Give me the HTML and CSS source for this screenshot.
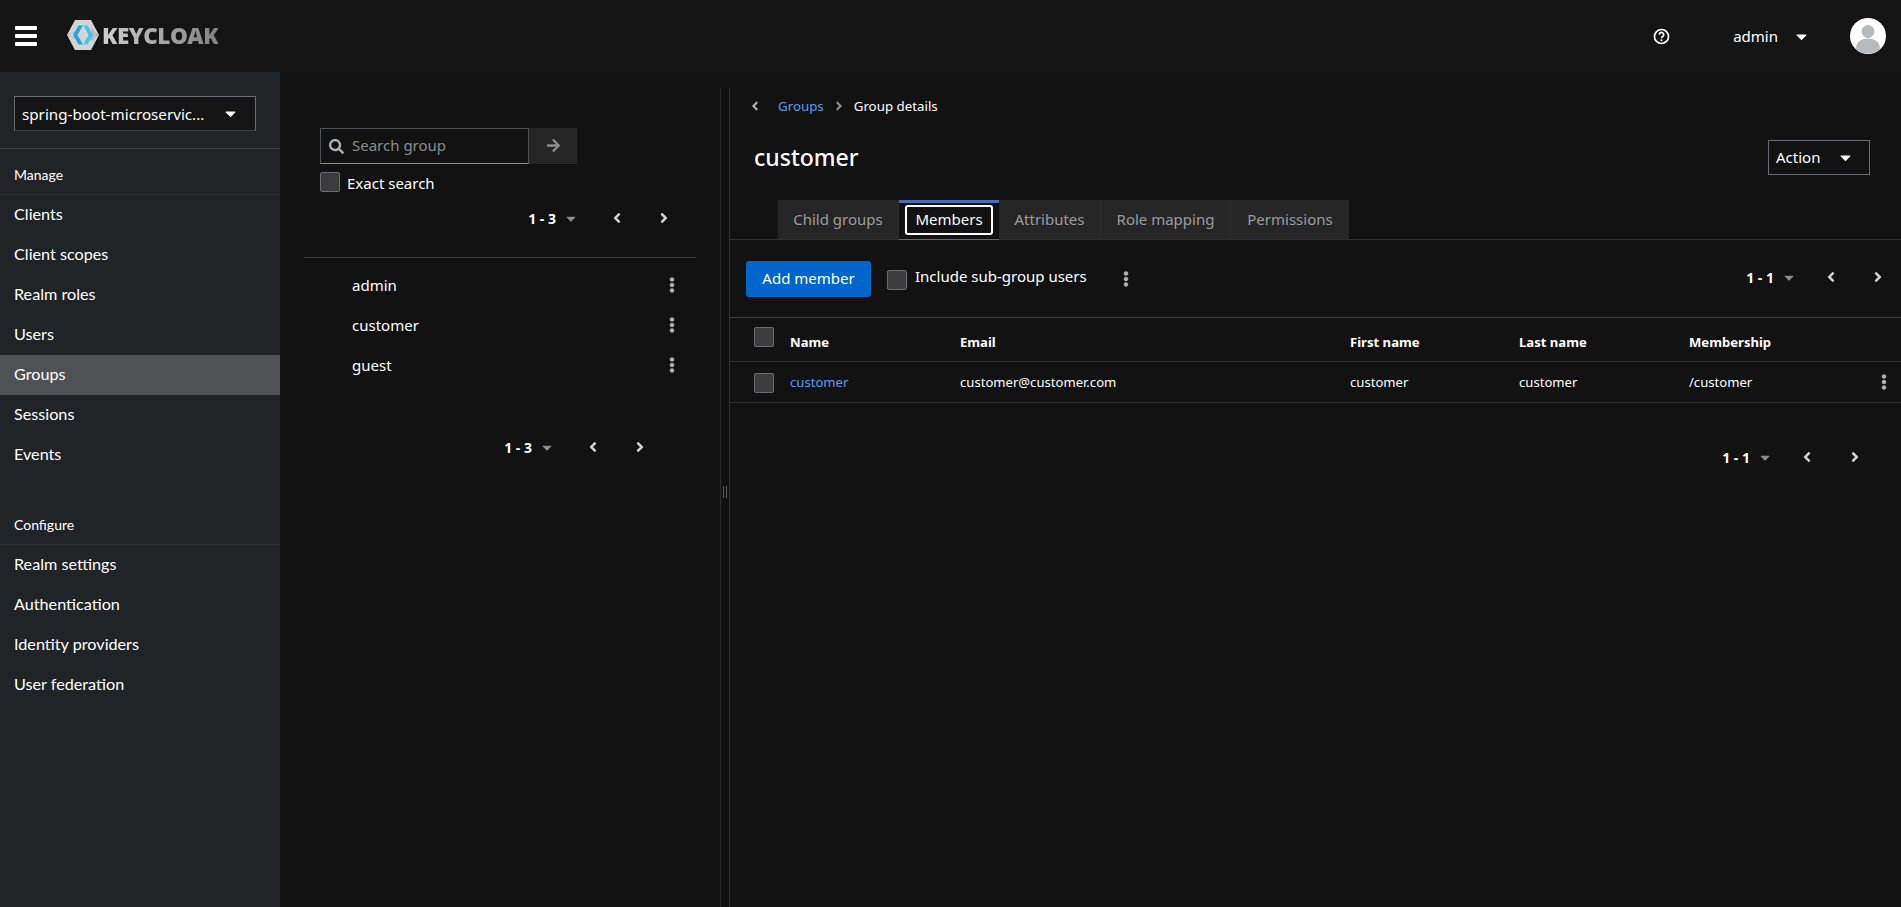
FILE: index.html
```html
<!DOCTYPE html>
<html lang="en">
<head>
<meta charset="utf-8">
<title>Keycloak - Groups</title>
<link rel="stylesheet" href="styles.css">
</head>
<body>
<svg class="defs" aria-hidden="true">
  <symbol id="caret" viewBox="0 0 320 512"><path d="M31.3 192h257.3c17.8 0 26.7 21.5 14.1 34.1L174.1 354.8c-7.8 7.8-20.5 7.8-28.3 0L17.2 226.1C4.6 213.5 13.5 192 31.3 192z"/></symbol>
  <symbol id="left" viewBox="0 0 256 512"><path d="M31.7 239l136-136c9.4-9.4 24.6-9.4 33.9 0l22.6 22.6c9.4 9.4 9.4 24.6 0 33.9L127.9 256l96.4 96.4c9.4 9.4 9.4 24.6 0 33.9L201.7 409c-9.4 9.4-24.6 9.4-33.9 0l-136-136c-9.5-9.4-9.5-24.6-.1-34z"/></symbol>
  <symbol id="right" viewBox="0 0 256 512"><path d="M224.3 273l-136 136c-9.4 9.4-24.6 9.4-33.9 0l-22.6-22.6c-9.4-9.4-9.4-24.6 0-33.9l96.4-96.4-96.4-96.4c-9.4-9.4-9.4-24.6 0-33.9L54.3 103c9.4-9.4 24.6-9.4 33.9 0l136 136c9.5 9.4 9.5 24.6.1 34z"/></symbol>
  <symbol id="kebab" viewBox="0 0 192 512"><path d="M96 184c39.8 0 72 32.2 72 72s-32.2 72-72 72-72-32.2-72-72 32.2-72 72-72zM24 80c0 39.8 32.2 72 72 72s72-32.2 72-72S135.8 8 96 8 24 40.2 24 80zm0 352c0 39.8 32.2 72 72 72s72-32.2 72-72-32.2-72-72-72-72 32.2-72 72z"/></symbol>
  <symbol id="search" viewBox="0 0 512 512"><path d="M505 442.7L405.3 343c-4.5-4.5-10.6-7-17-7H372c27.6-35.3 44-79.7 44-128C416 93.1 322.9 0 208 0S0 93.1 0 208s93.1 208 208 208c48.3 0 92.7-16.4 128-44v16.3c0 6.4 2.5 12.5 7 17l99.7 99.7c9.4 9.4 24.6 9.4 33.9 0l28.3-28.3c9.4-9.4 9.4-24.6.1-34zM208 336c-70.7 0-128-57.2-128-128 0-70.7 57.2-128 128-128 70.7 0 128 57.2 128 128 0 70.7-57.2 128-128 128z"/></symbol>
  <symbol id="arrow" viewBox="0 0 448 512"><path d="M190.5 66.9l22.2-22.2c9.4-9.4 24.6-9.4 33.9 0L441 239c9.4 9.4 9.4 24.6 0 33.9L246.6 467.3c-9.4 9.4-24.6 9.4-33.9 0l-22.2-22.2c-9.5-9.5-9.3-25 .4-34.3L311.4 296H24c-13.3 0-24-10.7-24-24v-32c0-13.3 10.7-24 24-24h287.4L190.9 101.2c-9.8-9.3-10-24.8-.4-34.3z"/></symbol>
</svg>

<header class="masthead">
  <div class="hamburger"><span></span><span></span><span></span></div>
  <div class="brand">
    <svg class="brand-mark" viewBox="0 0 32 32" aria-hidden="true">
      <polygon points="0,16 8,1 24,1 32,16 24,31 8,31" fill="#d4d4d4"/>
      <path d="M1 16 L9 12 L9 20 Z M31 16 L24 11 L27 16 L24 21 Z M24 11 L31 16 L24 21 M26 9 L26 23 M22 16 L32 16" stroke="#a8a8a8" stroke-width=".6" fill="none"/>
      <polygon points="11.500,6.500 16,6.500 10.500,16 16,25.500 11.500,25.500 6,16" fill="#25a5df"/>
      <polygon points="20.500,6.500 16.500,6.500 21.500,16 16.500,25.500 20.500,25.500 26,16" fill="#3cc6f2"/>
    </svg>
    <span class="brand-name">KEYCLOAK</span>
  </div>
  <div class="masthead-tools">
    <svg class="help" viewBox="0 0 16 16" aria-hidden="true">
      <circle cx="8" cy="8" r="6.6" fill="none" stroke="#fff" stroke-width="1.6"/>
      <path d="M5.900 6.300a2.100 2.100 0 1 1 3.300 1.700c-.8.500-1.200.9-1.200 1.600" fill="none" stroke="#fff" stroke-width="1.500"/>
      <circle cx="8" cy="11.600" r="1" fill="#fff"/>
    </svg>
    <span class="user-name">admin</span>
    <svg class="ico ico-caret-user"><use href="#caret"/></svg>
    <svg class="avatar" viewBox="0 0 36 36" aria-hidden="true">
      <circle cx="18" cy="18" r="18" fill="#fff"/>
      <circle cx="18" cy="13.500" r="6.500" fill="#b8bbbe"/>
      <path d="M6 31c0-7 5-10.500 12-10.500S30 24 30 31a18 18 0 0 1-24 0z" fill="#b8bbbe"/>
    </svg>
  </div>
</header>

<div class="shell">
  <nav class="sidebar">
    <div class="realm-wrap">
      <div class="realm-select">
        <span class="realm-name">spring-boot-microservic...</span>
        <svg class="ico ico-caret-white"><use href="#caret"/></svg>
      </div>
    </div>
    <div class="nav-title">Manage</div>
    <ul class="nav-list">
      <li class="nav-item">Clients</li>
      <li class="nav-item">Client scopes</li>
      <li class="nav-item">Realm roles</li>
      <li class="nav-item">Users</li>
      <li class="nav-item is-current">Groups</li>
      <li class="nav-item">Sessions</li>
      <li class="nav-item">Events</li>
    </ul>
    <div class="nav-title nav-title-second">Configure</div>
    <ul class="nav-list">
      <li class="nav-item">Realm settings</li>
      <li class="nav-item">Authentication</li>
      <li class="nav-item">Identity providers</li>
      <li class="nav-item">User federation</li>
    </ul>
  </nav>

  <section class="tree-panel">
    <div class="search-row">
      <div class="search-input">
        <svg class="ico ico-search"><use href="#search"/></svg>
        <span class="placeholder">Search group</span>
      </div>
      <div class="search-go"><svg class="ico ico-arrow"><use href="#arrow"/></svg></div>
    </div>
    <label class="check-row">
      <span class="checkbox"></span>
      <span class="check-label">Exact search</span>
    </label>
    <div class="pager pager-tree-top">
      <b class="pager-count">1 - 3</b>
      <svg class="ico ico-caret-grey"><use href="#caret"/></svg>
      <svg class="ico ico-chev pager-prev"><use href="#left"/></svg>
      <svg class="ico ico-chev pager-next"><use href="#right"/></svg>
    </div>
    <ul class="tree-list">
      <li class="tree-item"><span>admin</span><svg class="ico ico-kebab"><use href="#kebab"/></svg></li>
      <li class="tree-item"><span>customer</span><svg class="ico ico-kebab"><use href="#kebab"/></svg></li>
      <li class="tree-item"><span>guest</span><svg class="ico ico-kebab"><use href="#kebab"/></svg></li>
    </ul>
    <div class="pager pager-tree-bottom">
      <b class="pager-count">1 - 3</b>
      <svg class="ico ico-caret-grey"><use href="#caret"/></svg>
      <svg class="ico ico-chev pager-prev"><use href="#left"/></svg>
      <svg class="ico ico-chev pager-next"><use href="#right"/></svg>
    </div>
  </section>

  <div class="splitter"><span class="grip"></span></div>

  <main class="detail">
    <div class="crumbs">
      <svg class="ico ico-crumb-back"><use href="#left"/></svg>
      <a class="link">Groups</a>
      <svg class="ico ico-crumb-sep"><use href="#right"/></svg>
      <span>Group details</span>
    </div>
    <div class="title-row">
      <h1 class="title">customer</h1>
      <div class="action-select">
        <span>Action</span>
        <svg class="ico ico-caret-white"><use href="#caret"/></svg>
      </div>
    </div>
    <div class="tabs">
      <div class="tab tab-child">Child groups</div>
      <div class="tab tab-members"><span class="tab-focus">Members</span></div>
      <div class="tab tab-attrs">Attributes</div>
      <div class="tab tab-roles">Role mapping</div>
      <div class="tab tab-perms">Permissions</div>
    </div>
    <div class="toolbar">
      <button class="btn-primary">Add member</button>
      <label class="check-row check-sub">
        <span class="checkbox"></span>
        <span class="check-sub-label">Include sub-group users</span>
      </label>
      <svg class="ico ico-kebab ico-kebab-toolbar"><use href="#kebab"/></svg>
      <div class="pager pager-detail-top">
        <b class="pager-count">1 - 1</b>
        <svg class="ico ico-caret-grey"><use href="#caret"/></svg>
        <svg class="ico ico-chev pager-prev"><use href="#left"/></svg>
        <svg class="ico ico-chev pager-next"><use href="#right"/></svg>
      </div>
    </div>
    <div class="table">
      <div class="table-row table-head">
        <span class="cell-check"><span class="checkbox checkbox-head"></span></span>
        <span>Name</span><span>Email</span><span>First name</span><span>Last name</span><span>Membership</span><span></span>
      </div>
      <div class="table-row table-body">
        <span class="cell-check"><span class="checkbox checkbox-row"></span></span>
        <a class="link">customer</a><span>customer@customer.com</span><span>customer</span><span>customer</span><span>/customer</span>
        <svg class="ico ico-kebab ico-kebab-row"><use href="#kebab"/></svg>
      </div>
    </div>
    <div class="pager pager-detail-bottom">
      <b class="pager-count">1 - 1</b>
      <svg class="ico ico-caret-grey"><use href="#caret"/></svg>
      <svg class="ico ico-chev pager-prev"><use href="#left"/></svg>
      <svg class="ico ico-chev pager-next"><use href="#right"/></svg>
    </div>
  </main>
</div>
</body>
</html>
```
FILE: styles.css
```css
* { box-sizing: border-box; }
html, body { margin: 0; height: 100%; overflow: hidden; }
body {
  background: #121212;
  color: #fff;
  font-family: "Noto Sans", "Liberation Sans", sans-serif;
  font-size: 14px;
}
ul { list-style: none; margin: 0; padding: 0; }
.defs { display: none; }
.ico { display: block; flex: none; fill: currentColor; }
.link { color: #5f9bf0; }

/* masthead */
.masthead {
  height: 72px;
  background: #151515;
  display: flex;
  align-items: center;
}
.hamburger { width: 22px; margin-left: 15px; display: flex; flex-direction: column; gap: 4px; }
.hamburger span { display: block; height: 4px; background: #fff; border-radius: 1px; }
.brand { display: flex; align-items: center; margin-left: 30px; margin-top: -2px; }
.brand-mark { width: 32px; height: 32px; }
.brand-name {
  font-family: "Open Sans", sans-serif;
  font-weight: 800;
  font-size: 22.500px;
  letter-spacing: -.5px;
  margin-left: 3px;
  background: linear-gradient(90deg, #d0d0d0, #808080);
  -webkit-background-clip: text;
  background-clip: text;
  color: transparent;
}
.masthead-tools { margin-left: auto; display: flex; align-items: center; padding-right: 15px; }
.help { width: 17px; height: 17px; margin-right: 63px; }
.user-name { font-size: 15px; }
.ico-caret-user { width: 11px; height: 17px; color: #fff; margin-left: 18px; }
.avatar { width: 36px; height: 36px; margin-left: 43px; }

/* shell */
.shell { display: flex; height: 835px; }

/* sidebar */
.sidebar { width: 280px; flex: none; background: #212427; font-family: Lato, sans-serif; }
.realm-wrap { padding: 24px 24px 16px 14px; border-bottom: 1px solid #3c3f42; height: 77px; }
.realm-select {
  height: 35px;
  background: #151515;
  border: 1px solid #6a6e73;
  border-bottom-color: #3c3f42;
  display: flex;
  align-items: center;
  justify-content: space-between;
  padding: 0 19px 0 7px;
  font-family: "Noto Sans", sans-serif;
  font-size: 15.200px;
  white-space: nowrap;
}
.ico-caret-white { width: 11px; height: 17px; color: #fff; }
.nav-title { height: 46px; padding: 17px 0 0 14px; font-size: 14px; border-bottom: 1px solid #2c2f32; line-height: 17px; }
.nav-title-second { margin-top: 24px; }
.nav-item { height: 40px; line-height: 37px; padding-left: 14px; font-size: 16.200px; }
.is-current { background: #4f5255; }

/* group tree */
.tree-panel { width: 440px; flex: none; padding: 56px 24px 0; display: flex; flex-direction: column; }
.search-row { display: flex; margin-left: 16px; height: 36px; }
.search-input {
  width: 209px;
  border: 1px solid #4f5255;
  border-bottom-color: #8a8d90;
  display: flex;
  align-items: center;
  padding-left: 8px;
}
.ico-search { width: 15px; height: 15px; color: #aeb0b3; }
.placeholder { margin-left: 8px; margin-top: -2px; color: #8a8d90; font-size: 15px; }
.search-go { width: 48px; background: #262626; display: flex; align-items: center; justify-content: center; }
.ico-arrow { width: 15px; height: 15px; color: #8a8d90; margin-top: -1px; }
.check-row { display: flex; align-items: center; gap: 7px; font-size: 15px; }
.tree-panel .check-row { margin: 8px 0 0 16px; height: 20px; }
.check-label { margin-top: 2px; }
.checkbox {
  display: block;
  flex: none;
  width: 20px;
  height: 20px;
  background: #3c3c3c;
  border: 1px solid #6a6e73;
  border-radius: 2px;
}

/* pagers */
.pager { display: flex; align-items: center; height: 20px; }
.pager-count { font-size: 14px; font-weight: 700; white-space: nowrap; }
.ico-caret-grey { width: 10px; height: 15px; color: #8a8d90; margin-left: 10px; }
.ico-chev { width: 12px; height: 16px; color: #d2d2d2; }
.pager-prev { margin-left: 35px; }
.pager-next { margin-left: 35px; }
.pager-tree-top { margin: 16px 0 0 0; justify-content: flex-end; padding-right: 26px; }
.pager-tree-bottom { margin-top: 52px; justify-content: flex-end; padding-right: 50px; }

/* tree list */
.tree-list { margin-top: 29px; border-top: 1px solid #3c3f42; padding-top: 7px; }
.tree-item {
  height: 40px;
  display: flex;
  align-items: center;
  justify-content: space-between;
  padding: 0 21px 0 48px;
  font-size: 15px;
}
.ico-kebab { width: 6px; height: 16px; color: #aeb0b3; }

/* splitter */
.splitter {
  width: 10px;
  flex: none;
  margin-top: 16px;
  border-left: 1px solid #2a2a2a;
  border-right: 1px solid #2e2e2e;
  display: flex;
  align-items: center;
  justify-content: center;
}
.grip { width: 4px; height: 12px; margin-top: -12px; border-left: 1px solid #555; border-right: 1px solid #555; }

/* detail */
.detail { flex: 1; min-width: 0; }
.crumbs { display: flex; align-items: center; height: 20px; margin-top: 24px; padding-left: 20px; font-size: 13.300px; }
.ico-crumb-back { width: 10px; height: 14px; color: #aeb0b3; }
.crumbs .link { margin-left: 18px; }
.ico-crumb-sep { width: 10px; height: 14px; color: #8a8d90; margin: 0 10px; }
.title-row { display: flex; align-items: center; justify-content: space-between; margin-top: 24px; height: 35px; padding: 0 31px 0 24px; }
.title { margin: 0; margin-top: -2px; font-size: 23px; font-weight: 500; }
.action-select {
  width: 102px;
  height: 35px;
  border: 1px solid #6a6e73;
  display: flex;
  align-items: center;
  justify-content: space-between;
  padding: 0 18px 0 7px;
  font-size: 15px;
}
.action-select span { margin-top: -2px; }

/* tabs */
.tabs { display: flex; margin-top: 25px; height: 40px; padding-left: 48px; border-bottom: 1px solid #2e2e2e; font-size: 15px; }
.tab { background: #262626; color: #9a9c9f; display: flex; align-items: center; justify-content: center; border-right: 1px solid #2c2c2c; height: 39px; padding-bottom: 2px; }
.tab-child { width: 121px; }
.tab-members { width: 100px; background: #121212; color: #fff; border-top: 3px solid #4a6cb0; border-right: 0; border-bottom: 1px solid #6a6e73; height: 40px; padding-bottom: 0; }
.tab-focus { width: 88px; height: 30px; margin-top: -2px; padding-bottom: 2px; border: 2px solid #fff; border-radius: 3px; display: flex; align-items: center; justify-content: center; }
.tab-attrs { width: 102px; }
.tab-roles { width: 130px; }
.tab-perms { width: 118px; border-right: 0; }

/* toolbar */
.toolbar { display: flex; align-items: center; height: 78px; padding: 0 0 0 16px; border-bottom: 1px solid #3c3f42; }
.btn-primary {
  width: 125px;
  height: 36px;
  border: 0;
  border-radius: 3px;
  background: #0066cc;
  color: #fff;
  padding-bottom: 2px;
  font: 15px "Noto Sans", sans-serif;
}
.check-sub { margin-left: 16px; gap: 8px; }
.check-sub .checkbox { margin-top: 2px; }
.check-sub-label { margin-top: -5px; }
.ico-kebab-toolbar { margin-left: 36px; }
.pager-detail-top { margin-left: auto; padding-right: 17px; margin-top: -3px; }
.pager-detail-top .pager-prev { margin-left: 31px; }
.pager-detail-top .pager-next { margin-left: 35px; }

/* table */
.table-row {
  display: grid;
  grid-template-columns: 36px 170px 390px 169px 170px 1fr 24px;
  align-items: center;
  border-bottom: 1px solid #2e2e2e;
  padding-left: 24px;
  font-size: 13.100px;
}
.table-head { height: 44px; font-weight: 700; }
.table-body { height: 41px; }
.cell-check { display: block; }
.checkbox-head { margin-top: -6px; }
.checkbox-row { margin-top: 1px; }
.table-head > span:not(.cell-check) { padding-top: 4px; }
.ico-kebab-row { justify-self: start; margin-left: 4px; }
.pager-detail-bottom { margin-top: 44px; justify-content: flex-end; padding-right: 40px; }
.pager-detail-bottom .pager-prev { margin-left: 31px; }
.pager-detail-bottom .pager-next { margin-left: 36px; }
```
